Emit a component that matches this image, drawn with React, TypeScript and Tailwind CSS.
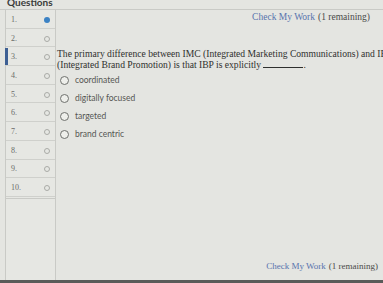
import * as React from 'react';

const questions = [1, 2, 3, 4, 5, 6, 7, 8, 9, 10];
const options = ['coordinated', 'digitally focused', 'targeted', 'brand centric'];

const serif = { fontFamily: '"Liberation Serif", "DejaVu Serif", serif' };

function QuestionRow({ n }: { n: number }) {
  const answered = n === 1;
  const current = n === 3;
  return (
    <div className="relative flex h-[18.7px] items-center justify-between border-b border-[#cfd0cc] pl-[5px] pr-[5px] pt-[2px]">
      {current && <div className="absolute -left-[1px] top-[1px] h-[17px] w-[3px] bg-[#3d5f93]" />}
      <span className="text-[8px] text-[#6b6d6a]" style={serif}>
        {n}.
      </span>
      {answered ? (
        <span className="size-[6px] rounded-full bg-[#3b82c4]" />
      ) : (
        <span className="size-[6px] rounded-full border border-[#a9aba7]" />
      )}
    </div>
  );
}

export default function App() {
  return (
    <div className="h-[283px] w-[383px] overflow-hidden bg-[#e4e5e1] font-['Lato',sans-serif]">
      {/* Header */}
      <div className="h-[10px] overflow-hidden border-b border-[#c9cac6] pl-[7px]">
        <div className="-mt-[4px] text-[10px] font-bold leading-[12px] text-[#3a3b39]">Questions</div>
      </div>

      <div className="flex h-[270px]">
        {/* Sidebar */}
        <div className="ml-[5px] flex w-[51px] shrink-0 flex-col border-x border-[#c9cac6] bg-[#e6e7e3]">
          {questions.map((n) => (
            <QuestionRow key={n} n={n} />
          ))}
          <div className="h-[2px] border-b border-[#c9cac6]" />
        </div>

        {/* Main */}
        <div className="flex min-w-0 flex-1 flex-col overflow-hidden">
          <div className="flex justify-end pr-[13px] pt-[1px] text-[9.5px] leading-[12px]" style={serif}>
            <span className="text-[#5873ad]">Check My Work</span>
            <span className="ml-[3px] text-[#4a4b49]">(1 remaining)</span>
          </div>

          <div className="mt-[25px] w-[400px] whitespace-nowrap pl-[1px] text-[9.6px] leading-[11px] text-[#2f302e]" style={serif}>
            <div>The primary difference between IMC (Integrated Marketing Communications) and IBP</div>
            <div>
              (Integrated Brand Promotion) is that IBP is explicitly{' '}
              <span className="inline-block w-[40px] border-b border-[#2f302e] align-baseline" />.
            </div>
          </div>

          <div className="mt-[4px] flex flex-col gap-[6px] pl-[4px]">
            {options.map((o) => (
              <label key={o} className="flex h-[12px] items-center gap-[6px]">
                <span className="size-[9px] rounded-full border border-[#6f716e] bg-[#eeefeb]" />
                <span className="text-[8.5px] text-[#555653]">{o}</span>
              </label>
            ))}
          </div>

          <div className="mt-auto mb-[8px] flex justify-end pr-[5px] text-[9px] leading-[11px]" style={serif}>
            <span className="text-[#5873ad]">Check My Work</span>
            <span className="ml-[3px] text-[#4a4b49]">(1 remaining)</span>
          </div>
        </div>
      </div>

      <div className="h-[3px] bg-[#5a5b59]" />
    </div>
  );
}
